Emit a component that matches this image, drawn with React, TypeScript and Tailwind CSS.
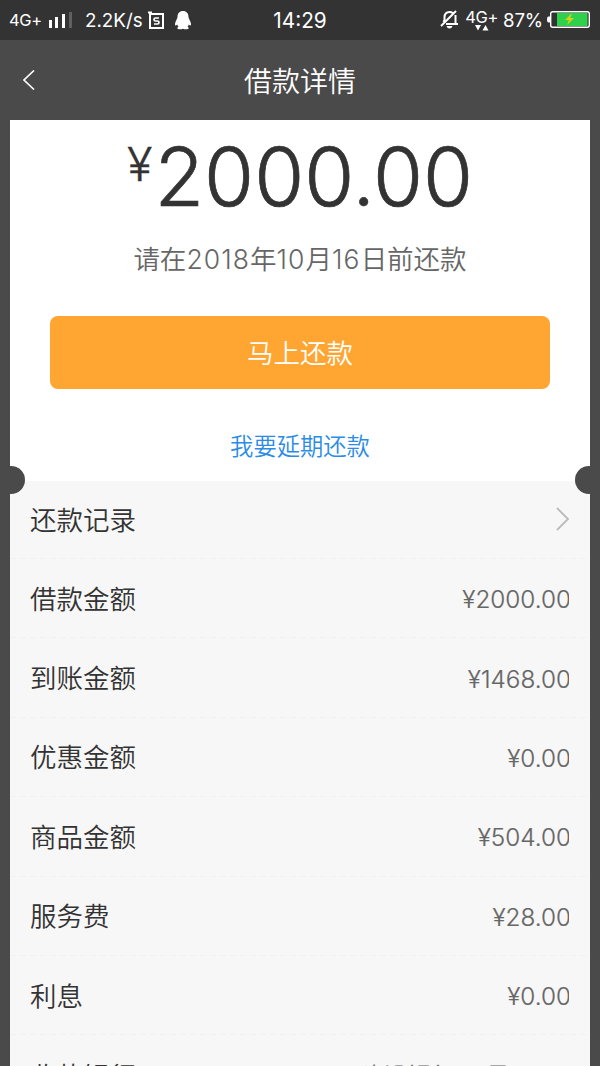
const rows = [
  { label: "借款金额", value: "¥2000.00" },
  { label: "到账金额", value: "¥1468.00" },
  { label: "优惠金额", value: "¥0.00" },
  { label: "商品金额", value: "¥504.00" },
  { label: "服务费", value: "¥28.00" },
  { label: "利息", value: "¥0.00" },
]

const StatusBar = () => (
  <div className="grid h-10 grid-cols-[1fr_auto_1fr] items-center bg-[#333333] text-white">
    <div className="flex items-center pl-[9px]">
      <span className="w-[39px] text-[16.5px] tracking-[-0.4px]">4G+</span>
      <svg width="24" height="18" viewBox="0 0 24 18" aria-hidden="true">
        <path d="M1 9h3v8H1zM7 6h3v11H7zM14 3h3v14h-3z" fill="#fff" />
        <path d="M21 1h3v16h-3z" fill="#606060" />
      </svg>
      <span className="ml-[13px] w-[63px] pt-[2px] text-[18.8px] whitespace-nowrap">2.2K/s</span>
      <svg width="17" height="19" viewBox="0 0 17 19" aria-hidden="true">
        <path d="M0 1.500h4M2 3h13v14H2z" fill="none" stroke="#fff" strokeWidth="2" />
        <path
          d="M11 7H7.500Q6 7 6 8.500T7.500 10h2q1.500 0 1.500 1.500T9.500 13H6"
          fill="none"
          stroke="#fff"
          strokeWidth="1.700"
        />
      </svg>
      <svg className="ml-[10px]" width="16" height="19" viewBox="0 0 16 19" aria-hidden="true">
        <path
          d="M8 0C4.500 0 2.500 2.500 2.500 6c0 2-2.500 4.500-2.500 7 0 1.200.5 1.700 1 1.500l1.200-1c.2 1 .7 1.700 1.400 2.300-1 .4-1.400 1-1.200 1.700.4 1 3.800 1 5.600.2 1.800.8 5.200.8 5.600-.2.200-.7-.2-1.300-1.200-1.700.7-.6 1.200-1.300 1.400-2.300l1.200 1c.5.2 1-.3 1-1.500 0-2.500-2.500-5-2.500-7C13.500 2.500 11.500 0 8 0z"
          fill="#fff"
        />
      </svg>
    </div>

    <span className="pt-[2px] text-[20.8px]">14:29</span>

    <div className="flex items-center justify-end pr-[10px]">
      <svg width="19" height="19" viewBox="0 0 19 19" aria-hidden="true">
        <path
          d="M3.500 12 4.500 10V7.500c0-3.500 2-5.500 5-5.500 1.500 0 2.700.5 3.500 1.200M15.500 5v8.500M6 14h12M1 16 16 1"
          fill="none"
          stroke="#fff"
          strokeWidth="2"
        />
        <path d="M6.500 16h6q-.8 2.500-3 2.500t-3-2.500z" fill="#fff" />
      </svg>
      <div className="ml-[6px] flex w-[33px] flex-col items-center pt-px">
        <span className="text-[16.5px] leading-[16px] tracking-[-0.4px]">4G+</span>
        <svg width="14" height="6" viewBox="0 0 14 6" aria-hidden="true">
          <path d="M0 0h6L3 5.500zM7.500 5.500h6L10.500 0z" fill="#fff" />
        </svg>
      </div>
      <span className="ml-[5px] pt-[2px] text-[18.7px] tracking-[-0.2px]">87%</span>
      <svg className="ml-[4px]" width="43" height="17" viewBox="0 0 43 17" aria-hidden="true">
        <path d="M3 5.500H1.500Q0 5.500 0 8.500t1.500 3H3z" fill="#fff" />
        <rect x="3.700" y=".7" width="38.600" height="15.600" rx="2" fill="none" stroke="#fff" strokeWidth="1.400" />
        <path d="M10 2h30.500v13H10z" fill="#2fd04b" />
        <path d="m24 3-6 6h4l-2 5 7-7h-4l2-4z" fill="#d6d21c" />
      </svg>
    </div>
  </div>
)

const Divider = () => (
  <div className="-mx-5 h-px bg-[repeating-linear-gradient(90deg,#f1f1f1_0_6px,transparent_6px_10px)]" />
)

export default function App() {
  return (
    <div
      lang="zh-CN"
      className="h-[1066px] overflow-hidden bg-[#4a4a4a] font-['Inter','Noto_Sans_CJK_SC',sans-serif]"
    >
      <StatusBar />

      <header className="grid h-20 grid-cols-[60px_1fr_60px] items-center text-white">
        <button type="button" aria-label="返回" className="pl-[23px]">
          <svg width="12" height="20" viewBox="0 0 12 20" fill="none" stroke="#fff" strokeWidth="1.600">
            <path d="M11 .5 1 10l10 9.500" />
          </svg>
        </button>
        <h1 className="pt-[3px] text-center text-[28px] font-[350]">借款详情</h1>
      </header>

      <main className="relative mx-[10px]">
        <section className="flex h-[361px] flex-col items-center bg-white">
          <div className="flex h-[112px] items-start font-[350] text-[#333333]">
            <span className="mt-[19px] text-[47px] leading-[50px] [-webkit-text-stroke:0.3px_#333333]">¥</span>
            <span className="mt-[9px] ml-[2px] text-[81px] leading-[97px] [-webkit-text-stroke:0.7px_#333333]">
              2000.00
            </span>
          </div>
          <p className="mt-[8px] text-[26.5px] leading-[38px] font-[350] whitespace-nowrap text-[#666666]">
            请在<span className="tracking-[1.1px]">2018</span>年
            <span className="tracking-[1.1px]">10</span>月
            <span className="tracking-[1.1px]">16</span>日前还款
          </p>
          <button
            type="button"
            className="mt-[38px] h-[73px] w-[500px] rounded-lg bg-[#ffa532] pt-[2px] text-[26.5px] font-[350] text-white"
          >
            马上还款
          </button>
          <a href="#" className="mt-[41px] text-[23.3px] leading-[34px] font-[350] text-[#2a8ce5]">
            我要延期还款
          </a>
        </section>

        <div className="absolute top-[346px] -left-[13px] size-7 rounded-full bg-[#4a4a4a]" />
        <div className="absolute top-[346px] -right-[13px] size-7 rounded-full bg-[#4a4a4a]" />

        <section className="h-[585px] overflow-hidden bg-[#f7f7f7] px-5 text-[26.5px] font-[350] text-[#333333]">
          <div className="flex h-[77px] items-center justify-between">
            <span className="pt-[2px]">还款记录</span>
            <svg
              className="mb-[2px]"
              width="14"
              height="24"
              viewBox="0 0 14 24"
              fill="none"
              stroke="#bbbbbb"
              strokeWidth="1.800"
            >
              <path d="m1 1 11 11L1 23" />
            </svg>
          </div>
          <Divider />
          {rows.map((row) => (
            <div key={row.label}>
              <div className="flex h-[78.4px] items-center justify-between pt-[2.5px]">
                <span>{row.label}</span>
                <span className="mr-[1.5px] overflow-hidden text-[24.3px] text-[#666666] [-webkit-text-stroke:0.2px_#666666]">
                  <span className="-mr-[2.5px]">{row.value}</span>
                </span>
              </div>
              <Divider />
            </div>
          ))}
          <div className="flex h-[84px] items-center justify-between">
            <span>收款银行</span>
            <span className="pr-[60px] text-[24px] text-[#666666]">建设银行 尾号</span>
          </div>
        </section>
      </main>
    </div>
  )
}
